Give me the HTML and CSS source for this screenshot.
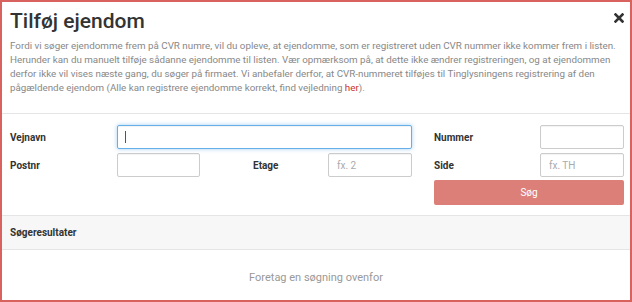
FILE: index.html
```html
<!DOCTYPE html>
<html lang="da">

<head>
    <meta charset="UTF-8">
    <meta name="viewport" content="width=device-width, initial-scale=1.0">
    <title>Tilføj ejendom</title>
    <link rel="stylesheet" href="styles.css">
</head>

<body>
    <div class="modal">
        <div class="modal-header">
            <div class="title-row">
                <h4 class="modal-title">Tilføj ejendom</h4>
                <button class="close" type="button" aria-label="Luk">
                    <svg width="10" height="10" viewBox="0 0 10 10">
                        <path d="M1.5 1.5 L8.5 8.5 M8.5 1.5 L1.5 8.5" stroke="#333" stroke-width="2.6" stroke-linecap="square" />
                    </svg>
                </button>
            </div>
            <p class="intro">Fordi vi søger ejendomme frem på CVR numre, vil du opleve, at ejendomme, som er registreret uden CVR nummer ikke kommer frem i listen. Herunder kan du manuelt tilføje sådanne ejendomme til listen. Vær opmærksom på, at dette ikke ændrer registreringen, og at ejendommen derfor ikke vil vises næste gang, du søger på firmaet. Vi anbefaler derfor, at CVR-nummeret tilføjes til Tinglysningens registrering af den pågældende ejendom (Alle kan registrere ejendomme korrekt, find vejledning <a href="#">her</a>).</p>
        </div>

        <form class="search-form">
            <label class="lbl lbl-vej" for="vejnavn">Vejnavn</label>
            <div class="field field-vej">
                <input id="vejnavn" class="input is-focused" type="text">
                <span class="caret"></span>
            </div>
            <label class="lbl lbl-nummer" for="nummer">Nummer</label>
            <input id="nummer" class="input in-nummer" type="text">

            <label class="lbl lbl-postnr" for="postnr">Postnr</label>
            <input id="postnr" class="input in-postnr" type="text">
            <label class="lbl lbl-etage" for="etage">Etage</label>
            <input id="etage" class="input in-etage" type="text" placeholder="fx. 2">
            <label class="lbl lbl-side" for="side">Side</label>
            <input id="side" class="input in-side" type="text" placeholder="fx. TH">

            <button class="btn-search" type="button">Søg</button>
        </form>

        <div class="results-head">Søgeresultater</div>
        <div class="results-empty">Foretag en søgning ovenfor</div>
    </div>
</body>

</html>
```

FILE: styles.css
```css
html,
body {
    margin: 0;
    padding: 0;
    background: #fff;
}

body {
    font-family: Roboto, 'Liberation Sans', sans-serif;
    color: #333;
}

.modal {
    width: 632px;
    height: 302px;
    box-sizing: border-box;
    border: 2px solid #d8625e;
    display: flex;
    flex-direction: column;
    overflow: hidden;
}

.modal-header {
    padding: 7px 6px 18px 8px;
    border-bottom: 1px solid #e5e5e5;
}

.title-row {
    display: flex;
    justify-content: space-between;
    align-items: flex-start;
}

.modal-title {
    margin: 0;
    font-size: 21px;
    line-height: 24px;
    font-weight: 500;
    color: #333;
}

.close {
    border: 0;
    background: none;
    padding: 0;
    margin-top: 4px;
    width: 10px;
    height: 10px;
    display: flex;
}

.intro {
    margin: 6px 0 0;
    font-size: 9.8px;
    line-height: 14px;
    color: #888;
}

.intro a {
    color: #c9302c;
    text-decoration: none;
}

.search-form {
    display: grid;
    grid-template-columns: 107px 83px 53px 75px 84px 22px 106px 84px;
    grid-template-rows: 24px 24px 24px;
    row-gap: 4px;
    padding: 11px 6px 10px 8px;
    border-bottom: 1px solid #e5e5e5;
}

.lbl {
    font-size: 10px;
    font-weight: 700;
    color: #333;
    display: flex;
    align-items: center;
}

.input {
    box-sizing: border-box;
    width: 100%;
    height: 24px;
    border: 1px solid #ccc;
    border-radius: 2px;
    padding: 0 8px;
    font-family: inherit;
    font-size: 10px;
    color: #333;
    box-shadow: inset 0 1px 1px rgba(0, 0, 0, 0.05);
    outline: none;
}

.input::placeholder {
    color: #aaa;
}

.input.is-focused {
    border-color: #66afe9;
    box-shadow: inset 0 1px 1px rgba(0, 0, 0, 0.05), 0 0 4px rgba(102, 175, 233, 0.6);
}

.lbl-vej {
    grid-column: 1;
    grid-row: 1;
}

.field-vej {
    grid-column: 2 / 6;
    grid-row: 1;
    position: relative;
}

.caret {
    position: absolute;
    left: 8px;
    top: 6px;
    width: 1px;
    height: 12px;
    background: #555;
}

.lbl-nummer {
    grid-column: 7;
    grid-row: 1;
}

.in-nummer {
    grid-column: 8;
    grid-row: 1;
}

.lbl-postnr {
    grid-column: 1;
    grid-row: 2;
}

.in-postnr {
    grid-column: 2;
    grid-row: 2;
}

.lbl-etage {
    grid-column: 4;
    grid-row: 2;
}

.in-etage {
    grid-column: 5;
    grid-row: 2;
}

.lbl-side {
    grid-column: 7;
    grid-row: 2;
}

.in-side {
    grid-column: 8;
    grid-row: 2;
}

.btn-search {
    grid-column: 7 / 9;
    grid-row: 3;
    margin-top: -1px;
    border: 0;
    border-radius: 2px;
    background: #dc7f78;
    color: #fff;
    font-family: inherit;
    font-size: 10px;
}

.results-head {
    background: #f7f7f7;
    border-bottom: 1px solid #e5e5e5;
    height: 33px;
    padding: 0 8px;
    display: flex;
    align-items: center;
    font-size: 10px;
    font-weight: 700;
    color: #333;
}

.results-empty {
    flex: 1;
    display: flex;
    align-items: center;
    justify-content: center;
    font-size: 11px;
    color: #999;
    padding-top: 4px;
}
```
